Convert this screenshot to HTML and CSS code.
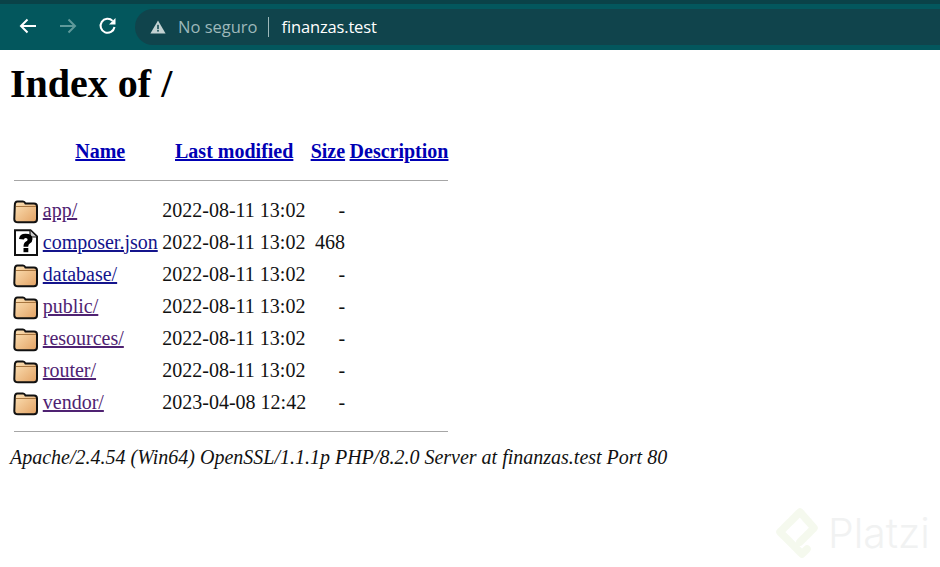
FILE: index.html
```html
<!DOCTYPE html>
<html lang="es">
<head>
<meta charset="utf-8">
<title>Index of /</title>
<link rel="stylesheet" href="styles.css">
</head>
<body>
<svg class="defs" width="0" height="0" aria-hidden="true">
  <defs>
    <linearGradient id="fold" x1="0" y1="0" x2="1" y2="1">
      <stop offset="0" stop-color="#fde3b8"/>
      <stop offset="1" stop-color="#e2a162"/>
    </linearGradient>
    <symbol id="folder" viewBox="0 0 25 27">
      <path d="M1.8 8.5 Q1.8 4.5 4.5 4.5 H10 Q11.5 4.5 12.5 6.5 H21 Q24 6.5 24 9.5 V22 Q24 25.3 21 25.3 H5 Q1.3 25.3 1.3 22 Z" fill="url(#fold)" stroke="#111" stroke-width="2"/>
      <path d="M3 9.5 H23" stroke="#a87640" stroke-width="1"/>
    </symbol>
    <symbol id="unknown" viewBox="0 0 25 27">
      <path d="M2 1.2 H17.5 L24 7.5 V26 H2 Z" fill="#fff" stroke="#111" stroke-width="2"/>
      <path d="M17 1.5 V8 H23.5" fill="#ccc" stroke="#111" stroke-width="1.2"/>
      <path d="M6 10 Q6.5 4.8 12.5 4.8 Q19.5 4.8 19.5 10 Q19.5 13 16.8 14.4 Q15.2 15.2 15.2 17.8 H10.5 Q10.5 13.8 13 12.6 Q14.6 11.8 14.6 10.4 Q14.6 8.9 12.7 8.9 Q11 8.9 10.8 10.6 Z" fill="#000"/>
      <rect x="10.5" y="19" width="4.8" height="4.2" fill="#000"/>
    </symbol>
    <symbol id="logo" viewBox="14 6 46 54">
      <path d="M40 42 L54 28 L40 12 L20 32 L42 54 L47 49" fill="none" stroke="#f5f9ee" stroke-width="7.5" stroke-linejoin="round" stroke-linecap="round"/>
    </symbol>
  </defs>
</svg>

<header class="toolbar">
  <svg class="nav-icon" viewBox="0 0 20 20" width="20" height="20"><path d="M18 10 H3 M9.5 3.5 L3 10 L9.5 16.5" fill="none" stroke="#fff" stroke-width="2"/></svg>
  <svg class="nav-icon" viewBox="0 0 20 20" width="20" height="20"><path d="M2 10 H17 M10.5 3.5 L17 10 L10.5 16.5" fill="none" stroke="#5f9a9b" stroke-width="2"/></svg>
  <svg class="nav-icon" viewBox="0 0 20 20" width="20" height="20"><path d="M16.5 11 A7 7 0 1 1 14.6 4.9" fill="none" stroke="#fff" stroke-width="2"/><path d="M17.5 2 V8.5 H11 Z" fill="#fff"/></svg>
  <div class="omnibox">
    <svg class="warn" viewBox="0 0 16 14" width="16" height="14"><path d="M8 0.5 L15.6 13.5 H0.4 Z" fill="#c3d2d2"/><rect x="7.2" y="4.8" width="1.6" height="4.4" fill="#174c54"/><rect x="7.2" y="10" width="1.6" height="1.6" fill="#174c54"/></svg>
    <span class="insecure">No seguro</span>
    <span class="sep"></span>
    <span class="host">finanzas.test</span>
  </div>
</header>

<main class="page">
  <h1>Index of /</h1>
  <table class="listing">
    <tr class="head">
      <th></th>
      <th><a href="#">Name</a></th>
      <th><a href="#">Last modified</a></th>
      <th><a href="#">Size</a></th>
      <th><a href="#">Description</a></th>
    </tr>
    <tr><th colspan="5" class="rule"><hr></th></tr>
    <tr><td class="ic"><svg class="file-icon"><use href="#folder"/></svg></td><td><a class="seen" href="#">app/</a></td><td>2022-08-11 13:02</td><td class="size">-</td><td></td></tr>
    <tr><td class="ic"><svg class="file-icon"><use href="#unknown"/></svg></td><td><a href="#">composer.json</a></td><td>2022-08-11 13:02</td><td class="size">468</td><td></td></tr>
    <tr><td class="ic"><svg class="file-icon"><use href="#folder"/></svg></td><td><a href="#">database/</a></td><td>2022-08-11 13:02</td><td class="size">-</td><td></td></tr>
    <tr><td class="ic"><svg class="file-icon"><use href="#folder"/></svg></td><td><a class="seen" href="#">public/</a></td><td>2022-08-11 13:02</td><td class="size">-</td><td></td></tr>
    <tr><td class="ic"><svg class="file-icon"><use href="#folder"/></svg></td><td><a class="seen" href="#">resources/</a></td><td>2022-08-11 13:02</td><td class="size">-</td><td></td></tr>
    <tr><td class="ic"><svg class="file-icon"><use href="#folder"/></svg></td><td><a class="seen" href="#">router/</a></td><td>2022-08-11 13:02</td><td class="size">-</td><td></td></tr>
    <tr><td class="ic"><svg class="file-icon"><use href="#folder"/></svg></td><td><a class="seen" href="#">vendor/</a></td><td>2023-04-08 12:42</td><td class="size">-</td><td></td></tr>
    <tr><th colspan="5" class="rule rule-end"><hr></th></tr>
  </table>
  <address>Apache/2.4.54 (Win64) OpenSSL/1.1.1p PHP/8.2.0 Server at finanzas.test Port 80</address>
</main>

<div class="watermark">
  <svg class="wm-logo" width="46" height="54"><use href="#logo"/></svg>
  <span>Platzi</span>
</div>
</body>
</html>
```

FILE: styles.css
```css
* { box-sizing: border-box; }

html, body {
  margin: 0;
  height: 100%;
  overflow: hidden;
  background: #fff;
}

body {
  font-family: "Liberation Serif", serif;
  font-size: 20px;
  color: #111;
  position: relative;
}

.defs { position: absolute; }

.toolbar {
  height: 50px;
  background: #03575d;
  border-top: 4px solid #0a4248;
  display: flex;
  align-items: center;
  gap: 20px;
  padding: 0 0 0 18px;
  font-family: "Open Sans", "Liberation Sans", sans-serif;
}

.nav-icon { flex: none; margin-top: -2px; }

.omnibox {
  flex: 1;
  height: 36px;
  margin-left: -3px;
  margin-top: -1px;
  background: #10444c;
  border-radius: 18px 0 0 18px;
  display: flex;
  align-items: center;
  padding-left: 15px;
  font-size: 16.5px;
}

.warn { flex: none; }

.insecure { color: #9db8ba; margin-left: 12px; }

.sep {
  width: 1px;
  height: 20px;
  background: #9db8ba;
  margin: 0 13px 0 10px;
}

.host { color: #fff; letter-spacing: -0.15px; }

.page { padding: 0 10px; }

h1 {
  font-size: 40px;
  line-height: 46px;
  font-weight: bold;
  color: #000;
  margin: 0;
  padding-top: 11px;
}

.listing {
  border-collapse: separate;
  border-spacing: 2.5px 0;
  margin-top: 29px;
  margin-left: 0.5px;
  line-height: 23px;
}

.listing a { color: #14148c; }
.listing a.seen { color: #4f2272; }
.listing .head a { color: #0000b4; }

.listing td {
  height: 32px;
  padding: 0 1.25px;
  white-space: nowrap;
}

.listing th {
  padding: 0 1.25px;
  height: 30px;
  white-space: nowrap;
}

.listing th.rule { height: 28px; vertical-align: middle; }
.listing th.rule-end { height: 26px; }

.listing .ic { width: 27px; padding: 0; line-height: 0; }

.size { text-align: right; }

hr {
  margin: 0;
  border: 0;
  border-top: 1px solid #a6a6a6;
  height: 1px;
}

.file-icon { width: 25px; height: 27px; display: block; }

address {
  font-style: italic;
  line-height: 23px;
  margin-top: 2px;
}

.watermark {
  position: absolute;
  left: 774px;
  top: 506px;
  display: flex;
  align-items: center;
  gap: 8px;
  font-family: "Inter", "Liberation Sans", sans-serif;
  font-size: 41px;
  font-weight: 300;
  color: #f1f2f2;
}
```
